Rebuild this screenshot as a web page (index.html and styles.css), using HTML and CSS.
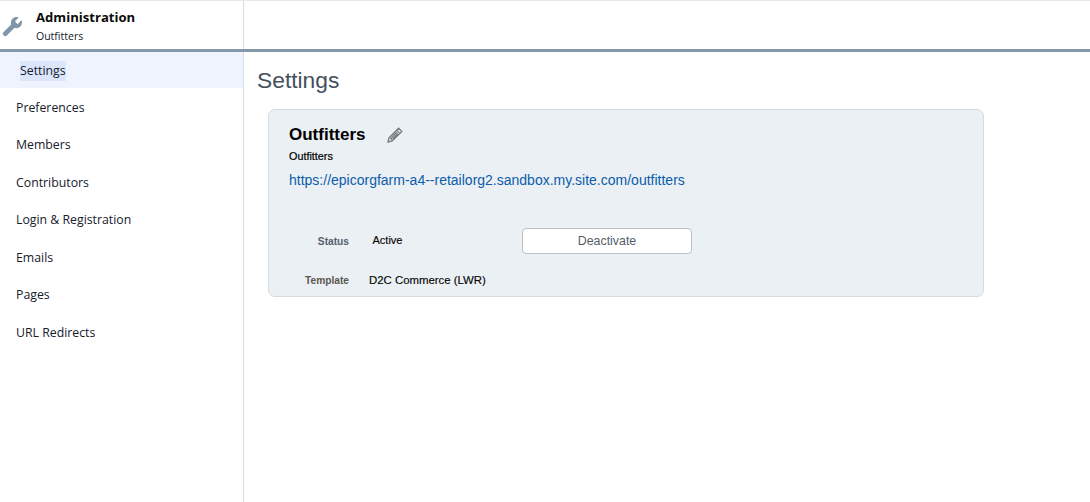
FILE: index.html
```html
<!DOCTYPE html>
<html lang="en">
<head>
  <meta charset="UTF-8" />
  <title>Settings - Administration</title>
  <link rel="stylesheet" href="styles.css">
</head>
<body>
  <div class="topline"></div>
  <header class="header">
    <div class="brand">
      <svg class="wrench" viewBox="0 0 24 24" width="21" height="21">
        <path d="M22.6 5.4c-.1-.3-.5-.4-.7-.2l-3.6 3.6c-.3.3-.7.3-1 0l-2.1-2.1c-.3-.3-.3-.7 0-1l3.6-3.6c.2-.2.1-.6-.2-.7-2.300-.7-4.900-.1-6.600 1.600-1.800 1.800-2.300 4.400-1.500 6.600L1.600 18.500c-1 .9-1 2.500 0 3.400l.5.5c.9 1 2.500 1 3.400 0l8.900-8.900c2.200.8 4.800.3 6.600-1.500 1.700-1.700 2.300-4.300 1.600-6.600z"/>
      </svg>
      <div class="brand-text">
        <div class="brand-title">Administration</div>
        <div class="brand-sub">Outfitters</div>
      </div>
    </div>
  </header>

  <div class="layout">
    <nav class="sidebar">
      <a class="nav-item active"><span>Settings</span></a>
      <a class="nav-item">Preferences</a>
      <a class="nav-item">Members</a>
      <a class="nav-item">Contributors</a>
      <a class="nav-item">Login &amp; Registration</a>
      <a class="nav-item">Emails</a>
      <a class="nav-item">Pages</a>
      <a class="nav-item">URL Redirects</a>
    </nav>

    <main class="content">
      <h1>Settings</h1>
      <section class="card">
        <div class="card-title">
          <h2>Outfitters</h2>
          <svg class="pencil" viewBox="0 0 16 16" width="16" height="16">
            <path d="M11.6 1.2 14.800 4.400 5.200 14 1 15l1-4.200zM10.300 3.800l1.900 1.900M3.200 10.900l1.900 1.900M9.800 5.300 4.400 10.700M11 6.500 5.600 11.900"/>
          </svg>
        </div>
        <div class="card-sub">Outfitters</div>
        <a class="card-link">https://epicorgfarm-a4--retailorg2.sandbox.my.site.com/outfitters</a>

        <div class="row row-status">
          <span class="row-label">Status</span>
          <span class="row-value status-value">Active</span>
          <button class="btn">Deactivate</button>
        </div>
        <div class="row row-template">
          <span class="row-label template-label">Template</span>
          <span class="row-value">D2C Commerce (LWR)</span>
        </div>
      </section>
    </main>
  </div>
</body>
</html>
```

FILE: styles.css
```css
* {
  box-sizing: border-box;
}
html, body {
  height: 100%;
}
body {
  margin: 0;
  background: #fff;
  font-family: "Liberation Sans", Arial, sans-serif;
  color: #000;
  overflow: hidden;
  display: flex;
  flex-direction: column;
}
.topline {
  height: 1px;
  background: #e8e8e8;
}
.header {
  height: 51px;
  border-bottom: 3px solid #8499a8;
}
.brand {
  width: 244px;
  height: 100%;
  border-right: 1px solid #d8dde3;
  display: flex;
  padding: 8px 0 0 2px;
}
.wrench {
  fill: #8096aa;
  margin-top: 7px;
}
.brand-text {
  margin-left: 13px;
}
.brand-title {
  font-family: "Open Sans", sans-serif;
  font-size: 13.100px;
  font-weight: 700;
  line-height: 16px;
  color: #0b0b0b;
}
.brand-sub {
  font-family: "Open Sans", sans-serif;
  font-size: 10.500px;
  line-height: 14px;
  margin-top: 4px;
  color: #16202c;
}
.layout {
  flex: 1;
  display: flex;
}
.sidebar {
  width: 244px;
  border-right: 1px solid #d8dde3;
  display: flex;
  flex-direction: column;
}
.nav-item {
  height: 37.500px;
  padding: 1px 0 0 16px;
  display: flex;
  align-items: center;
  font-family: "Open Sans", sans-serif;
  font-size: 12.300px;
  color: #16202c;
}
.nav-item.active {
  height: 36px;
  padding: 2px 0 0 20px;
  background: #eff3fe;
}
.nav-item.active span {
  background: #dbe6fb;
  line-height: 20px;
}
.content {
  flex: 1;
  padding: 0 0 0 13px;
}
h1 {
  margin: 13px 0 14px;
  font-size: 22.800px;
  font-weight: 400;
  line-height: 30px;
  color: #44505c;
}
.card {
  width: 716px;
  height: 188px;
  margin-left: 11px;
  padding: 14px 20px 0;
  background: #ebf0f4;
  border: 1px solid #d6dbe0;
  border-radius: 7px;
}
.card-title {
  display: flex;
  align-items: center;
  height: 22px;
}
h2 {
  margin: 0;
  font-size: 17px;
  font-weight: 700;
  line-height: 22px;
}
.pencil {
  margin-left: 21px;
  fill: none;
  stroke: #77797c;
  stroke-width: 1.300;
}
.card-sub {
  margin-top: 3px;
  font-size: 10.800px;
  -webkit-text-stroke: 0.2px #000;
  line-height: 14px;
}
.card-link {
  display: block;
  margin-top: 8px;
  font-size: 14px;
  line-height: 18px;
  color: #0b5cab;
}
.row {
  display: flex;
  align-items: center;
}
.row-status {
  margin-top: 39px;
  height: 26px;
}
.row-template {
  margin-top: 19px;
  height: 14px;
}
.row-label {
  width: 60px;
  text-align: right;
  font-weight: 700;
  font-size: 10.200px;
  color: #54606c;
}
.template-label {
  color: #5e5650;
}
.row-value {
  margin-left: 20px;
  font-size: 11.400px;
  -webkit-text-stroke: 0.15px #000;
  color: #080808;
}
.status-value {
  margin-left: 23.500px;
  margin-top: -2px;
  width: 149.500px;
  font-size: 11px;
}
.btn {
  width: 170px;
  height: 26px;
  padding: 0;
  background: #fff;
  border: 1px solid #bcc0c5;
  border-radius: 4px;
  font-family: inherit;
  font-size: 12.400px;
  color: #54606c;
}
```
